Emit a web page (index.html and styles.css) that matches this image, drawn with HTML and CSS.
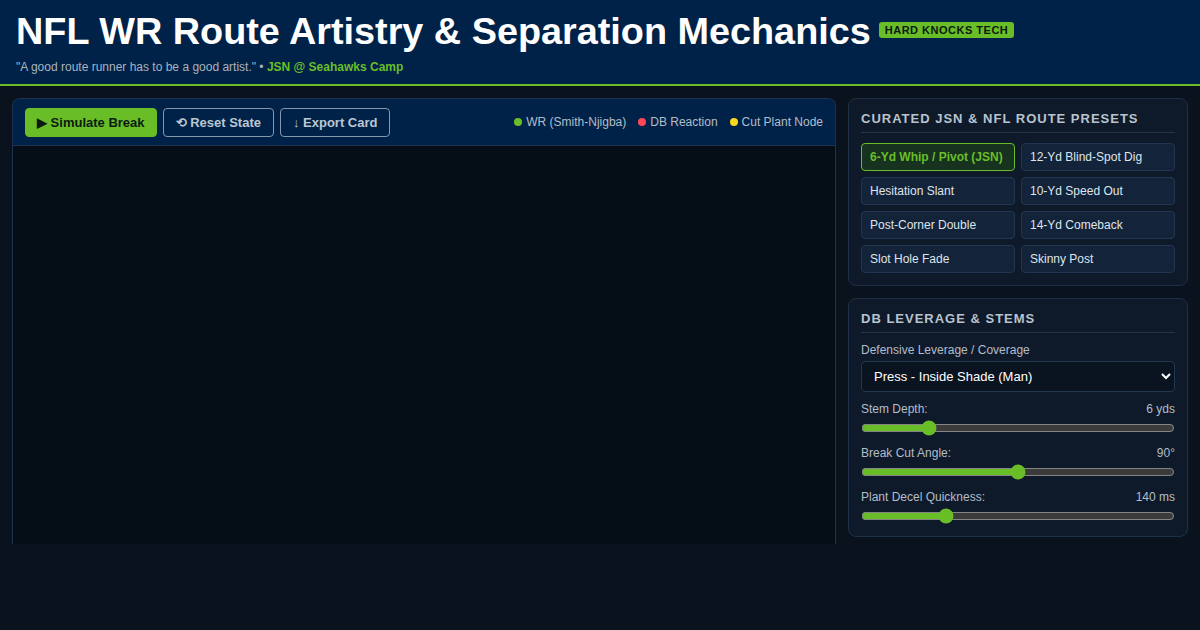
FILE: index.html
```html
<!DOCTYPE html>
<html lang="en">
<head>
  <meta charset="UTF-8">
  <meta name="viewport" content="width=device-width, initial-scale=1.0">
  <title>NFL WR Route Artistry &amp; Separation Mechanics</title>
  <link rel="stylesheet" href="styles.css">
</head>
<body>
  <header>
    <div class="title-row">
      <h1>NFL WR Route Artistry &amp; Separation Mechanics</h1>
      <span class="badge">HARD KNOCKS TECH</span>
    </div>
    <p class="quote">"A good route runner has to be a good artist." &bull; <strong>JSN @ Seahawks Camp</strong></p>
  </header>

  <main class="layout">
    <section class="stage">
      <div class="toolbar">
        <div class="actions">
          <button class="btn btn-primary">&#9654; Simulate Break</button>
          <button class="btn btn-outline">&#10226; Reset State</button>
          <button class="btn btn-outline">&darr; Export Card</button>
        </div>
        <div class="legend">
          <span><i class="dot dot-wr"></i>WR (Smith-Njigba)</span>
          <span><i class="dot dot-db"></i>DB Reaction</span>
          <span><i class="dot dot-cut"></i>Cut Plant Node</span>
        </div>
      </div>
      <div class="field" id="field"></div>
    </section>

    <aside class="sidebar">
      <div class="card">
        <h3>Curated JSN &amp; NFL Route Presets</h3>
        <div class="presets">
          <button class="preset active">6-Yd Whip / Pivot (JSN)</button>
          <button class="preset">12-Yd Blind-Spot Dig</button>
          <button class="preset">Hesitation Slant</button>
          <button class="preset">10-Yd Speed Out</button>
          <button class="preset">Post-Corner Double</button>
          <button class="preset">14-Yd Comeback</button>
          <button class="preset">Slot Hole Fade</button>
          <button class="preset">Skinny Post</button>
        </div>
      </div>

      <div class="card">
        <h3>DB Leverage &amp; Stems</h3>
        <label class="field-label" for="leverage">Defensive Leverage / Coverage</label>
        <select id="leverage" class="select">
          <option>Press - Inside Shade (Man)</option>
          <option>Off - Outside Leverage (Cover 3)</option>
          <option>Bail - Quarters</option>
        </select>

        <div class="control">
          <div class="control-head"><span>Stem Depth:</span><span id="stemVal">6 yds</span></div>
          <input type="range" min="2" max="22" value="6" id="stem">
        </div>
        <div class="control">
          <div class="control-head"><span>Break Cut Angle:</span><span id="angleVal">90&deg;</span></div>
          <input type="range" min="30" max="150" value="90" id="angle">
        </div>
        <div class="control">
          <div class="control-head"><span>Plant Decel Quickness:</span><span id="plantVal">140 ms</span></div>
          <input type="range" min="50" max="400" value="140" id="plant">
        </div>
      </div>
    </aside>
  </main>

  <script>
    document.getElementById('stem').oninput = function () {
      document.getElementById('stemVal').innerText = this.value + ' yds';
    };
    document.getElementById('angle').oninput = function () {
      document.getElementById('angleVal').innerText = this.value + '\u00b0';
    };
    document.getElementById('plant').oninput = function () {
      document.getElementById('plantVal').innerText = this.value + ' ms';
    };

    document.querySelectorAll('.preset').forEach(btn => {
      btn.addEventListener('click', () => {
        document.querySelectorAll('.preset').forEach(b => b.classList.remove('active'));
        btn.classList.add('active');
      });
    });
  </script>
</body>
</html>
```

FILE: styles.css
```css
* {
  box-sizing: border-box;
}
html {
  color-scheme: dark;
}
body {
  font-family: "Liberation Sans", Arial, sans-serif;
  background-color: #0a131d;
  color: #dfe5ec;
  margin: 0;
  padding: 0;
  height: 630px;
  overflow: hidden;
}
header {
  background-color: #002248;
  border-bottom: 2px solid #69be28;
  padding: 9px 16px 10px;
  height: 86px;
}
.title-row {
  display: flex;
  align-items: center;
  gap: 8px;
}
h1 {
  margin: 0;
  font-size: 37.8px;
  line-height: 44px;
  font-weight: bold;
  color: #fff;
}
.badge {
  background-color: #69be28;
  color: #0b1a10;
  font-size: 11px;
  font-weight: bold;
  letter-spacing: 0.5px;
  padding: 2px 6px;
  border-radius: 3px;
  margin-top: -2px;
}
.quote {
  margin: 7px 0 0;
  font-size: 12px;
  color: #a9b3be;
}
.quote strong {
  color: #69be28;
}

.layout {
  display: flex;
  gap: 12px;
  padding: 12px;
  align-items: flex-start;
}
.stage {
  flex: 1;
  border: 1px solid #1d3350;
  border-bottom: none;
  border-radius: 8px 8px 0 0;
  overflow: hidden;
}
.toolbar {
  display: flex;
  justify-content: space-between;
  align-items: center;
  background-color: #002248;
  border-bottom: 1px solid #1d3350;
  padding: 8px 12px;
  height: 47px;
}
.actions {
  display: flex;
  gap: 6px;
}
.btn {
  font-family: inherit;
  font-size: 13px;
  font-weight: bold;
  height: 29px;
  padding: 0 11px;
  border-radius: 4px;
  cursor: pointer;
}
.btn-primary {
  background-color: #69be28;
  color: #0b1a10;
  border: 1px solid #69be28;
}
.btn-outline {
  padding: 0 12px;
  background-color: transparent;
  color: #bcc6d1;
  border: 1px solid #8797aa;
}
.legend {
  display: flex;
  gap: 12px;
  font-size: 12px;
  color: #b3bdc8;
}
.legend span {
  display: flex;
  align-items: center;
}
.dot {
  width: 8px;
  height: 8px;
  border-radius: 50%;
  margin-right: 4px;
}
.dot-wr { background-color: #69be28; }
.dot-db { background-color: #ff4757; }
.dot-cut { background-color: #f9d71c; }
.field {
  height: 398px;
  background-color: #050d16;
}

.sidebar {
  width: 340px;
  display: flex;
  flex-direction: column;
  gap: 12px;
}
.card {
  background-color: #0e1a2a;
  border: 1px solid #1d3047;
  border-radius: 8px;
  padding: 12px;
}
.card h3 {
  margin: 0 0 10px;
  padding-bottom: 6px;
  border-bottom: 1px solid #22344a;
  font-size: 13px;
  font-weight: bold;
  text-transform: uppercase;
  letter-spacing: 1px;
  color: #b9c3ce;
}
.presets {
  display: grid;
  grid-template-columns: 1fr 1fr;
  gap: 6px;
}
.preset {
  font-family: inherit;
  font-size: 12px;
  text-align: left;
  height: 28px;
  padding: 0 8px;
  background-color: #132339;
  color: #dfe5ec;
  border: 1px solid #22364f;
  border-radius: 4px;
  cursor: pointer;
}
.preset.active {
  background-color: #17321f;
  border-color: #69be28;
  color: #69be28;
  font-weight: bold;
}
.field-label {
  display: block;
  font-size: 12px;
  line-height: 14px;
  color: #b3bdc8;
  margin-bottom: 4px;
}
.select {
  display: block;
  width: 100%;
  height: 31px;
  font-family: inherit;
  font-size: 13px;
  color: #fff;
  background-color: #0a1420;
  border: 1px solid #22364f;
  border-radius: 4px;
  padding: 0 8px;
  margin: 0 0 10px;
}
.control {
  margin-bottom: 10px;
}
.control:last-child {
  margin-bottom: 0;
}
.control-head {
  display: flex;
  justify-content: space-between;
  font-size: 12px;
  line-height: 14px;
  color: #b3bdc8;
}
input[type="range"] {
  display: block;
  width: 100%;
  margin: 4px 0 0;
  accent-color: #69be28;
  height: 16px;
}
```
